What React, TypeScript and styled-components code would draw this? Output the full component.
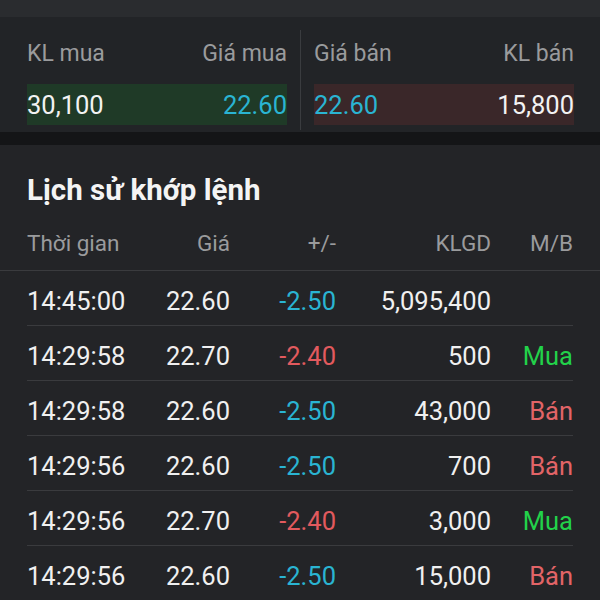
import React from "react";
import styled, { createGlobalStyle } from "styled-components";

const Global = createGlobalStyle`
  html, body { margin: 0; padding: 0; background: #232427; }
  body { font-family: Roboto, "Noto Sans", "Liberation Sans", sans-serif; }
`;

const Page = styled.div`
  width: 600px;
  height: 600px;
  overflow: hidden;
  background: #232427;
  display: flex;
  flex-direction: column;
`;

const TopStrip = styled.div`
  height: 17px;
  background: #2a2c2f;
  flex: none;
`;

const OrderBook = styled.div`
  height: 115px;
  flex: none;
  background: #222427;
  display: grid;
  grid-template-columns: 260px 1px 260px;
  column-gap: 13px;
  padding: 0 27px;
  box-sizing: border-box;
`;

const Side = styled.div`
  display: flex;
  flex-direction: column;
`;

const Divider = styled.div`
  margin-top: 13px;
  height: 100px;
  background: #3a3c3f;
`;

const LabelRow = styled.div`
  display: flex;
  justify-content: space-between;
  height: 36px;
  margin-top: 18px;
  align-items: center;
  font-size: 23px;
  color: #9a9b9d;
`;

const ValueBar = styled.div<{ $tone: "buy" | "sell" }>`
  margin-top: 13px;
  height: 41px;
  display: flex;
  justify-content: space-between;
  align-items: center;
  font-size: 25.5px;
  background: ${(p) => (p.$tone === "buy" ? "#1f3a27" : "#3a2729")};
`;

const Val = styled.span<{ $c?: string }>`
  color: ${(p) => p.$c || "#f2f2f2"};
`;

const DarkBand = styled.div`
  height: 13px;
  background: #141517;
  flex: none;
`;

const Title = styled.div`
  padding: 28px 27px 0;
  line-height: 34px;
  font-size: 29.5px;
  font-weight: 700;
  color: #f4f4f4;
`;

const cols = "103px 100px 106px 155px 82px";

const HeadRow = styled.div`
  display: grid;
  grid-template-columns: ${cols};
  padding: 23px 27px 14px;
  line-height: 26px;
  font-size: 22.5px;
  color: #9a9b9d;
  border-bottom: 1px solid #3a3b3e;
`;

const Cell = styled.div<{ $align?: "left" | "right"; $c?: string }>`
  text-align: ${(p) => p.$align || "right"};
  color: ${(p) => p.$c || "inherit"};
  white-space: nowrap;
`;

const Rows = styled.div`
  padding: 0 27px;
`;

const Row = styled.div`
  display: grid;
  grid-template-columns: ${cols};
  padding: 15px 0 9px;
  line-height: 30px;
  font-size: 25.5px;
  color: #f0f0f0;
  border-bottom: 1px solid #3a3b3e;
`;

const CYAN = "#2ab4d2";
const RED = "#e25a5e";
const GREEN = "#22d24a";
const SELL = "#e26467";

type Trade = { t: string; p: string; ch: string; up: boolean; v: string; side: "" | "Mua" | "Bán" };

const trades: Trade[] = [
  { t: "14:45:00", p: "22.60", ch: "-2.50", up: false, v: "5,095,400", side: "" },
  { t: "14:29:58", p: "22.70", ch: "-2.40", up: true, v: "500", side: "Mua" },
  { t: "14:29:58", p: "22.60", ch: "-2.50", up: false, v: "43,000", side: "Bán" },
  { t: "14:29:56", p: "22.60", ch: "-2.50", up: false, v: "700", side: "Bán" },
  { t: "14:29:56", p: "22.70", ch: "-2.40", up: true, v: "3,000", side: "Mua" },
  { t: "14:29:56", p: "22.60", ch: "-2.50", up: false, v: "15,000", side: "Bán" },
];

export default function App() {
  return (
    <Page>
      <Global />
      <TopStrip />
      <OrderBook>
        <Side>
          <LabelRow>
            <span>KL mua</span>
            <span>Giá mua</span>
          </LabelRow>
          <ValueBar $tone="buy">
            <Val>30,100</Val>
            <Val $c={CYAN}>22.60</Val>
          </ValueBar>
        </Side>
        <Divider />
        <Side>
          <LabelRow>
            <span>Giá bán</span>
            <span>KL bán</span>
          </LabelRow>
          <ValueBar $tone="sell">
            <Val $c={CYAN}>22.60</Val>
            <Val>15,800</Val>
          </ValueBar>
        </Side>
      </OrderBook>
      <DarkBand />
      <Title>Lịch sử khớp lệnh</Title>
      <HeadRow>
        <Cell $align="left">Thời gian</Cell>
        <Cell>Giá</Cell>
        <Cell>+/-</Cell>
        <Cell>KLGD</Cell>
        <Cell>M/B</Cell>
      </HeadRow>
      <Rows>
        {trades.map((r, i) => (
          <Row key={i}>
            <Cell $align="left">{r.t}</Cell>
            <Cell>{r.p}</Cell>
            <Cell $c={r.up ? RED : CYAN}>{r.ch}</Cell>
            <Cell>{r.v}</Cell>
            <Cell $c={r.side === "Mua" ? GREEN : SELL}>{r.side}</Cell>
          </Row>
        ))}
      </Rows>
    </Page>
  );
}
